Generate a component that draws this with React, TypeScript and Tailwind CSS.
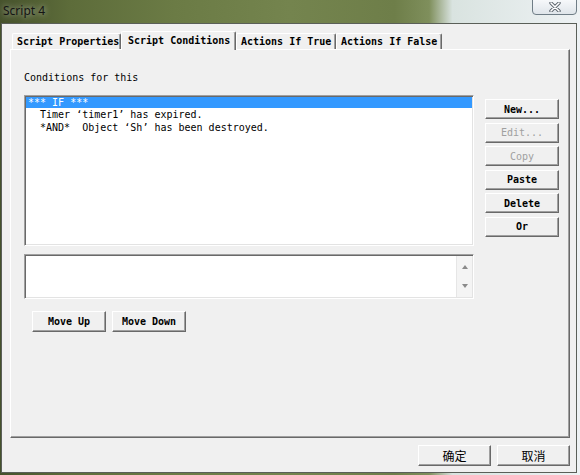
import React from 'react';

const mono = "font-['DejaVu_Sans_Mono',monospace]";
const raised =
    "border border-t-white border-l-white border-r-[#696969] border-b-[#696969] shadow-[inset_-1px_-1px_0_#a0a0a0] bg-[#f0f0f0]";

const SideButton = ({ label, disabled }: { label: string; disabled?: boolean }) => (
    <div
        className={`${raised} ${mono} h-[20px] w-[74px] flex items-center justify-center text-[10px] font-bold ${
            disabled ? 'text-[#a0a0a0] font-normal' : 'text-black'
        }`}
    >
        {label}
    </div>
);

const Tab = ({ label, width, active }: { label: string; width: string; active?: boolean }) => (
    <div
        className={`${mono} ${width} flex items-center text-[10px] font-bold text-black bg-[#f0f0f0] border-t border-l border-r border-t-white border-l-white border-r-[#696969] rounded-t-[2px] shadow-[inset_-1px_0_0_#a0a0a0] ${
            active ? 'h-[19px] -mb-px relative z-10 pl-[6px] pb-[2px]' : 'h-[16px] pl-[4px]'
        }`}
    >
        {label}
    </div>
);

const App = () => {
    const rows = ['  Timer \u2018timer1\u2019 has expired.', '  *AND*  Object \u2018Sh\u2019 has been destroyed.'];

    return (
        <div className="w-[580px] h-[475px] overflow-hidden bg-[linear-gradient(90deg,#46522c_0%,#5d6c3a_12%,#6b7b45_30%,#74844e_50%,#6e7e49_68%,#7f8f5c_74%,#d9e3e0_78%,#eef2f4_100%)]">
            {/* title bar */}
            <div className="h-[23px] flex items-start justify-between">
                <span className="pl-[3px] pt-[2px] text-[12px] text-[#141414] font-['Noto_Sans',sans-serif] [text-shadow:0_0_6px_rgba(255,255,255,0.7)]">
                    Script 4
                </span>
                <div className="mr-[3px] -mt-px w-[45px] h-[16px] rounded-b-[4px] border border-[#6f7d86] bg-[linear-gradient(180deg,#f6f8fa,#dfe5ea)] flex items-center justify-center">
                    <svg width="12" height="10" viewBox="0 0 12 10">
                        <path d="M2 1 L10 9 M10 1 L2 9" stroke="#5a636b" strokeWidth="3.4" strokeLinecap="round" />
                        <path d="M2 1 L10 9 M10 1 L2 9" stroke="#ffffff" strokeWidth="1.6" strokeLinecap="round" />
                    </svg>
                </div>
            </div>

            {/* client area */}
            <div className="ml-px w-[576px] h-[450px] border border-[#5a5f58] bg-[#f0f0f0] flex flex-col">
                <div className="mt-[7px] pl-[10px] flex items-end h-[18px]">
                    <Tab label="Script Properties" width="w-[109px]" />
                    <Tab label="Script Conditions" width="w-[115px]" active />
                    <Tab label="Actions If True" width="w-[100px]" />
                    <Tab label="Actions If False" width="w-[106px]" />
                </div>

                <div className="ml-[8px] w-[560px] h-[389px] border border-t-white border-l-white border-r-[#696969] border-b-[#696969] shadow-[inset_-1px_-1px_0_#a0a0a0] flex flex-col pl-[13px] pt-[22px]">
                    <div className={`${mono} text-[10px] leading-[12px] text-black`}>Conditions for this</div>

                    <div className="mt-[11px] flex">
                        <div className="w-[450px] flex flex-col">
                            <div className="h-[151px] bg-white border border-t-[#a0a0a0] border-l-[#a0a0a0] border-r-white border-b-white shadow-[inset_1px_1px_0_#696969,inset_-1px_-1px_0_#e3e3e3] flex flex-col pl-px pt-px pr-px">
                                <div className={`${mono} h-[11px] leading-[11px] bg-[#3399ff] text-white text-[10px] pl-[2px] whitespace-pre`}>
                                    *** IF ***
                                </div>
                                <div className="mt-[1px]">
                                    {rows.map((r) => (
                                        <div key={r} className={`${mono} h-[12.5px] leading-[12.5px] text-[10px] text-black pl-[2px] whitespace-pre`}>
                                            {r}
                                        </div>
                                    ))}
                                </div>
                            </div>

                            <div className="mt-[8px] h-[45px] bg-white border border-t-[#a0a0a0] border-l-[#a0a0a0] border-r-white border-b-white shadow-[inset_1px_1px_0_#696969,inset_-1px_-1px_0_#e3e3e3] flex justify-end pt-px pb-px pr-px">
                                <div className="w-[16px] bg-[#f4f4f4] border-l border-[#e6e6e6] flex flex-col items-center justify-between py-[8px]">
                                    <svg width="8" height="6" viewBox="0 0 8 6">
                                        <path d="M4 1 L7 5 L1 5 Z" fill="#8a8a8a" />
                                    </svg>
                                    <svg width="8" height="6" viewBox="0 0 8 6">
                                        <path d="M1 1 L7 1 L4 5 Z" fill="#8a8a8a" />
                                    </svg>
                                </div>
                            </div>

                            <div className="mt-[12px] pl-[8px] flex gap-[6px]">
                                <div className={`${raised} ${mono} h-[21px] w-[74px] flex items-center justify-center text-[10px] font-bold`}>Move Up</div>
                                <div className={`${raised} ${mono} h-[21px] w-[74px] flex items-center justify-center text-[10px] font-bold`}>Move Down</div>
                            </div>
                        </div>

                        <div className="ml-[11px] mt-[4px] flex flex-col gap-[3.6px]">
                            <SideButton label="New..." />
                            <SideButton label="Edit..." disabled />
                            <SideButton label="Copy" disabled />
                            <SideButton label="Paste" />
                            <SideButton label="Delete" />
                            <SideButton label="Or" />
                        </div>
                    </div>
                </div>

                <div className="mt-[7px] pr-[6px] flex justify-end gap-[6px]">
                    <div className={`${raised} h-[21px] w-[73px] flex items-center justify-center text-[12px] text-black font-['Noto_Sans_CJK_SC',sans-serif]`}>确定</div>
                    <div className={`${raised} h-[21px] w-[73px] flex items-center justify-center text-[12px] text-black font-['Noto_Sans_CJK_SC',sans-serif]`}>取消</div>
                </div>
            </div>
        </div>
    );
};

export default App;
